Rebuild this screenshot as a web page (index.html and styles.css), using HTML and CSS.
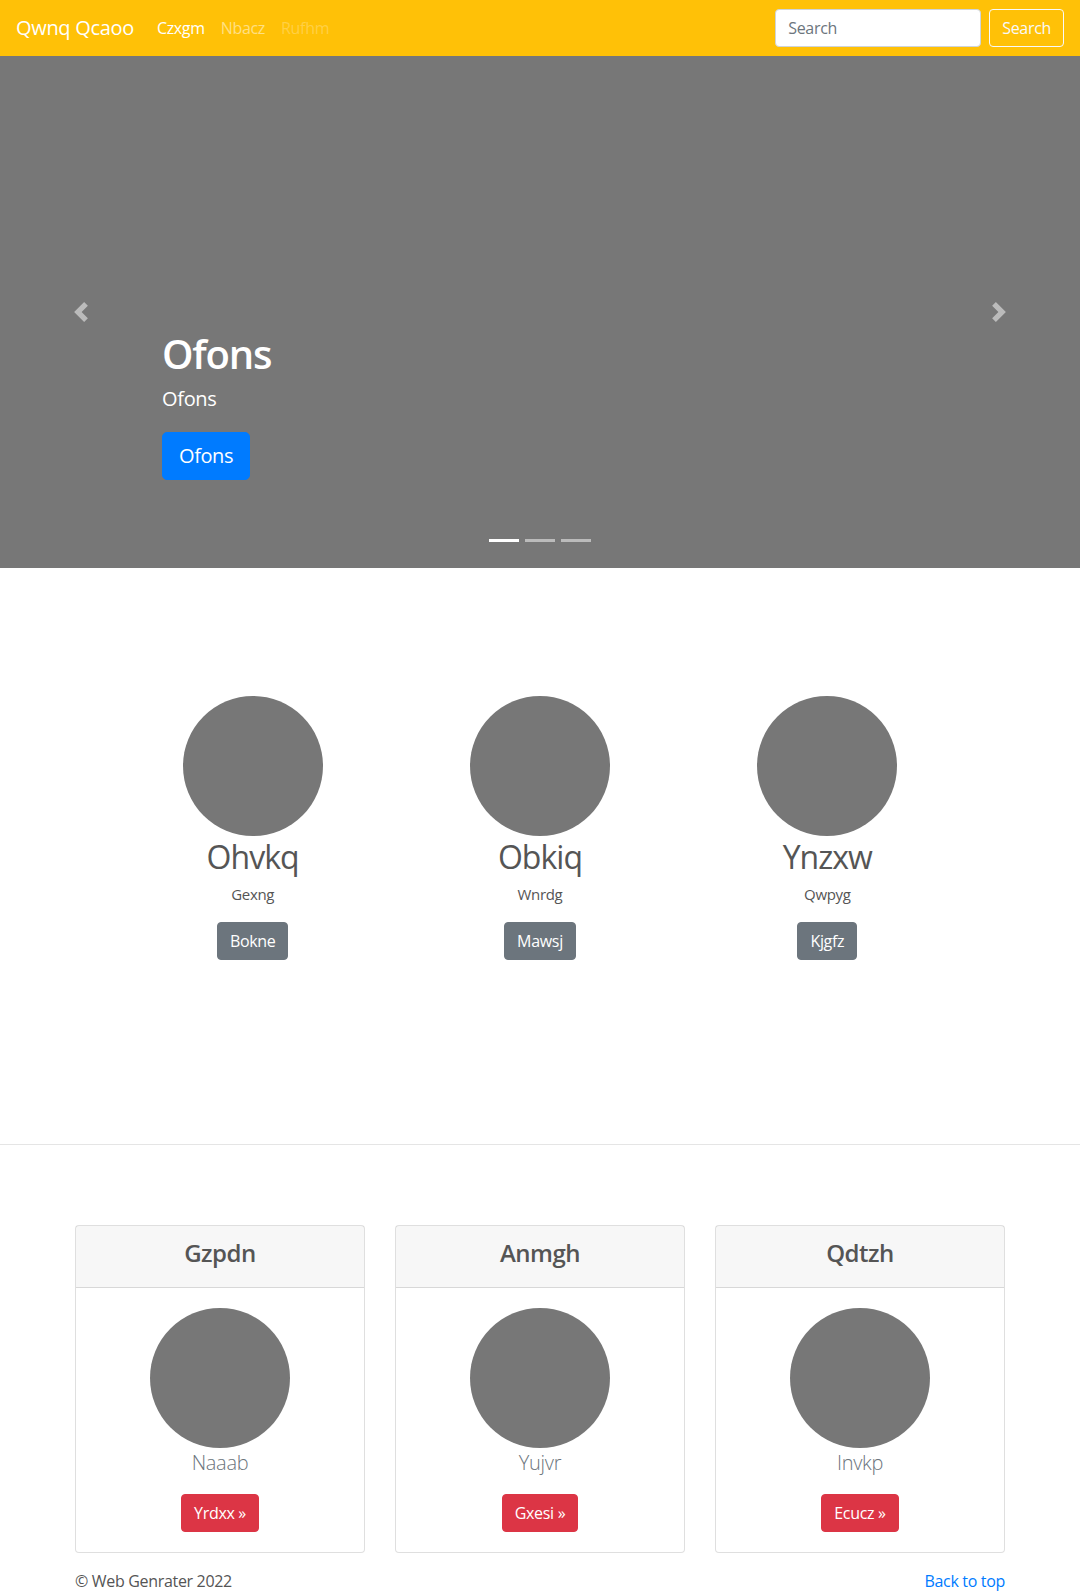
FILE: index.html
```html
<!DOCTYPE html>
<html lang="en">
<head>
<meta charset="utf-8">
<title>Qwnq Qcaoo</title>
<link rel="stylesheet" href="styles.css">
</head>
<body>
<header class="navbar">
  <div class="nav-left">
    <a class="brand" href="#">Qwnq Qcaoo</a>
    <ul class="nav-links">
      <li><a class="nav-link active" href="#">Czxgm</a></li>
      <li><a class="nav-link" href="#">Nbacz</a></li>
      <li><a class="nav-link disabled" href="#">Rufhm</a></li>
    </ul>
  </div>
  <form class="search-form">
    <input class="search-input" type="text" placeholder="Search">
    <button class="btn btn-outline-light" type="button">Search</button>
  </form>
</header>

<section class="carousel">
  <ol class="indicators">
    <li class="active"></li>
    <li></li>
    <li></li>
  </ol>
  <a class="control control-prev" href="#">
    <svg class="control-icon" viewBox="0 0 8 8" width="20" height="20"><path fill="#fff" d="M5.25 0l-4 4 4 4 1.5-1.5L4.25 4l2.5-2.5L5.25 0z"/></svg>
  </a>
  <a class="control control-next" href="#">
    <svg class="control-icon" viewBox="0 0 8 8" width="20" height="20"><path fill="#fff" d="M2.75 0l-1.5 1.5L3.75 4l-2.5 2.5L2.75 8l4-4-4-4z"/></svg>
  </a>
  <div class="caption">
    <h1 class="caption-title">Ofons</h1>
    <p class="caption-text">Ofons</p>
    <p class="caption-action"><a class="btn btn-lg btn-primary" href="#">Ofons</a></p>
  </div>
</section>

<section class="marketing">
  <div class="marketing-row">
    <div class="marketing-col">
      <svg class="circle" width="140" height="140" viewBox="0 0 140 140"><circle cx="70" cy="70" r="70" fill="#777"/></svg>
      <h2 class="marketing-title">Ohvkq</h2>
      <p class="marketing-text">Gexng</p>
      <p class="marketing-action"><a class="btn btn-secondary" href="#">Bokne</a></p>
    </div>
    <div class="marketing-col">
      <svg class="circle" width="140" height="140" viewBox="0 0 140 140"><circle cx="70" cy="70" r="70" fill="#777"/></svg>
      <h2 class="marketing-title">Obkiq</h2>
      <p class="marketing-text">Wnrdg</p>
      <p class="marketing-action"><a class="btn btn-secondary" href="#">Mawsj</a></p>
    </div>
    <div class="marketing-col">
      <svg class="circle" width="140" height="140" viewBox="0 0 140 140"><circle cx="70" cy="70" r="70" fill="#777"/></svg>
      <h2 class="marketing-title">Ynzxw</h2>
      <p class="marketing-text">Qwpyg</p>
      <p class="marketing-action"><a class="btn btn-secondary" href="#">Kjgfz</a></p>
    </div>
  </div>
</section>

<hr class="divider">

<section class="cards">
  <div class="card">
    <div class="card-header"><h4 class="card-title">Gzpdn</h4></div>
    <div class="card-body">
      <svg class="circle" width="140" height="140" viewBox="0 0 140 140"><circle cx="70" cy="70" r="70" fill="#777"/></svg>
      <p class="lead">Naaab</p>
      <a class="btn btn-danger" href="#">Yrdxx &raquo;</a>
    </div>
  </div>
  <div class="card">
    <div class="card-header"><h4 class="card-title">Anmgh</h4></div>
    <div class="card-body">
      <svg class="circle" width="140" height="140" viewBox="0 0 140 140"><circle cx="70" cy="70" r="70" fill="#777"/></svg>
      <p class="lead">Yujvr</p>
      <a class="btn btn-danger" href="#">Gxesi &raquo;</a>
    </div>
  </div>
  <div class="card">
    <div class="card-header"><h4 class="card-title">Qdtzh</h4></div>
    <div class="card-body">
      <svg class="circle" width="140" height="140" viewBox="0 0 140 140"><circle cx="70" cy="70" r="70" fill="#777"/></svg>
      <p class="lead">Invkp</p>
      <a class="btn btn-danger" href="#">Ecucz &raquo;</a>
    </div>
  </div>
</section>

<footer class="footer">
  <p class="footer-copy">&copy; Web Genrater 2022</p>
  <p class="footer-top"><a href="#">Back to top</a></p>
</footer>
</body>
</html>
```

FILE: styles.css
```css
* { box-sizing: border-box; }

html, body {
  margin: 0;
  padding: 0;
}

body {
  font-family: "Segoe UI", "Open Sans", "Noto Sans", sans-serif;
  font-size: 16px;
  line-height: 1.5;
  letter-spacing: -0.02em;
  color: #555;
  background: #fff;
}

a { text-decoration: none; }

/* Navbar */
.navbar {
  display: flex;
  align-items: center;
  justify-content: space-between;
  height: 56px;
  padding: 8px 16px;
  background: #ffc107;
}

.nav-left {
  display: flex;
  align-items: center;
}

.brand {
  font-size: 20px;
  line-height: 30px;
  padding: 5px 0;
  margin-right: 15px;
  color: #fff;
}

.nav-links {
  display: flex;
  list-style: none;
  margin: 0;
  padding: 0;
}

.nav-link {
  display: block;
  padding: 8px;
  line-height: 24px;
  color: rgba(255, 255, 255, 0.5);
}

.nav-link.active { color: #fff; }
.nav-link.disabled { color: rgba(255, 255, 255, 0.25); }

.search-form {
  display: flex;
  align-items: center;
}

.search-input {
  width: 206px;
  height: 38px;
  margin-right: 8px;
  padding: 6px 12px;
  font-family: inherit;
  font-size: 16px;
  line-height: 1.5;
  letter-spacing: -0.02em;
  color: #495057;
  background: #fff;
  border: 1px solid #ced4da;
  border-radius: 4px;
}

.search-input::placeholder { color: #6c757d; }

/* Buttons */
.btn {
  display: inline-block;
  padding: 6px 12px;
  font-family: inherit;
  font-size: 16px;
  line-height: 1.5;
  font-weight: 400;
  letter-spacing: -0.02em;
  border: 1px solid transparent;
  border-radius: 4px;
  color: #fff;
  text-align: center;
  vertical-align: middle;
}

.btn-lg {
  padding: 8px 16px;
  font-size: 20px;
  line-height: 1.5;
  border-radius: 5px;
}

.btn-outline-light {
  background: transparent;
  border-color: #f8f9fa;
  color: #f8f9fa;
}

.btn-primary { background: #007bff; border-color: #007bff; }
.btn-secondary { background: #6c757d; border-color: #6c757d; }
.btn-danger { background: #dc3545; border-color: #dc3545; }

/* Carousel */
.carousel {
  position: relative;
  height: 512px;
  background: #777;
}

.indicators {
  position: absolute;
  left: 0;
  right: 0;
  bottom: 0;
  display: flex;
  justify-content: center;
  margin: 0 15% 16px;
  padding: 0;
  list-style: none;
}

.indicators li {
  width: 30px;
  height: 23px;
  margin: 0 3px;
  border-top: 10px solid transparent;
  border-bottom: 10px solid transparent;
  background: #fff;
  background-clip: padding-box;
  opacity: 0.5;
}

.indicators li.active { opacity: 1; }

.control {
  position: absolute;
  top: 0;
  bottom: 0;
  width: 15%;
  display: flex;
  align-items: center;
  justify-content: center;
  opacity: 0.5;
}

.control-prev { left: 0; }
.control-next { right: 0; }

.control-icon { display: block; }

.caption {
  position: absolute;
  left: 15%;
  right: 15%;
  bottom: 52px;
  padding: 20px 0;
  color: #fff;
  text-align: left;
}

.caption-title {
  margin: 0 0 6px;
  font-size: 40px;
  line-height: 1.2;
  font-weight: 600;
  letter-spacing: -0.03em;
}

.caption-text {
  margin: 0 0 18px;
  font-size: 20px;
  line-height: 30px;
}

.caption-action {
  margin: 0 0 16px;
}

/* Marketing */
.marketing {
  padding: 128px 0 144px;
}

.marketing-row {
  display: grid;
  grid-template-columns: repeat(3, 1fr);
  width: 862px;
  margin: 0 auto;
  text-align: center;
}

.marketing-col {
  margin-bottom: 24px;
}

.circle {
  display: block;
  margin: 0 auto;
}

.marketing-title {
  margin: 0 0 6px;
  padding-top: 2px;
  font-size: 32px;
  line-height: 1.2;
  font-weight: 400;
  letter-spacing: -0.03em;
  color: #555;
}

.marketing-text {
  margin: 0 0 16px;
  font-size: 15px;
  line-height: 24px;
}

.marketing-action {
  margin: 0 0 16px;
}

.divider {
  margin: 0;
  border: 0;
  border-top: 1px solid rgba(0, 0, 0, 0.1);
}

/* Cards */
.cards {
  display: grid;
  grid-template-columns: repeat(3, 1fr);
  gap: 30px;
  width: 930px;
  margin: 0 auto;
  padding-top: 80px;
}

.card {
  border: 1px solid rgba(0, 0, 0, 0.125);
  border-radius: 4px;
  text-align: center;
  background: #fff;
}

.card-header {
  padding: 13px 20px 11px;
  background: rgba(0, 0, 0, 0.03);
  border-bottom: 1px solid rgba(0, 0, 0, 0.125);
}

.card-title {
  margin: 0 0 8px;
  font-size: 24px;
  line-height: 1.2;
  font-weight: 600;
  letter-spacing: -0.02em;
  color: #555;
}

.card-body {
  padding: 20px;
}

.lead {
  margin: 0 0 16px;
  font-size: 20px;
  line-height: 30px;
  font-weight: 300;
  color: #6c757d;
}

/* Footer */
.footer {
  display: flex;
  justify-content: space-between;
  width: 930px;
  margin: 0 auto;
  padding-top: 16px;
}

.footer p { margin: 0 0 16px; }

.footer-top a { color: #007bff; }
```
